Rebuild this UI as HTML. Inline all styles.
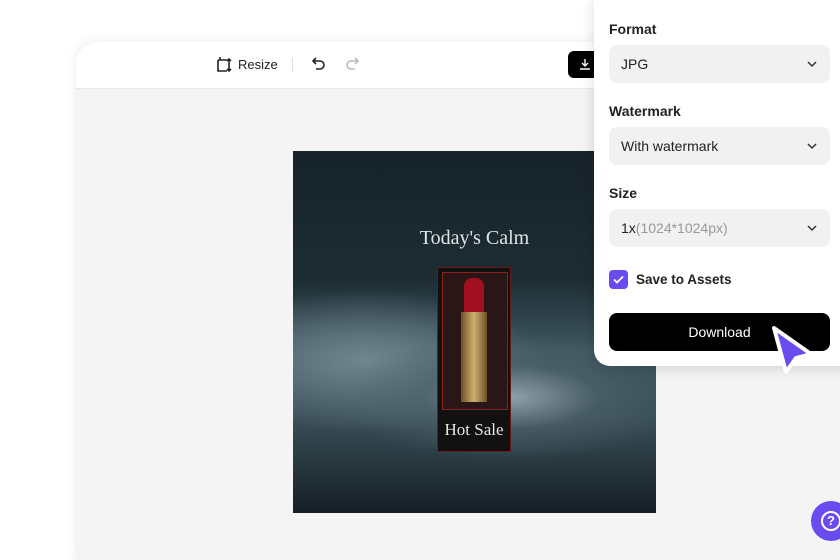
<!DOCTYPE html>
<html><head><style>
html,body{margin:0;width:840px;height:560px;overflow:hidden}
body{background:#fff;position:relative;font-family:"Liberation Sans",sans-serif}
.card{position:absolute;left:76px;top:42px;width:800px;height:518px;background:#f4f4f4;border-radius:22px 0 0 0;box-shadow:0 0 14px rgba(0,0,0,.08);overflow:hidden}
.hdr{position:absolute;left:0;top:0;right:0;height:46px;background:#fff;border-bottom:1px solid #e8e8e8}
.img{position:absolute;width:363px;height:362px;background:
radial-gradient(ellipse 60% 22% at 60% 68%,#8ea1ab 0%,rgba(80,100,110,.6) 40%,transparent 80%),
radial-gradient(ellipse 70% 28% at 20% 58%,#71868f 0%,transparent 70%),
linear-gradient(#17232a 0%,#1d2c33 35%,#3f5660 55%,#384c55 75%,#151f25 100%)}
.panel{position:absolute;left:594px;top:0;width:260px;height:366px;background:#fff;border-radius:0 0 0 16px;box-shadow:0 2px 14px rgba(0,0,0,.15)}
.lab{position:absolute;left:15px;font-size:14px;font-weight:bold;color:#222}
.sel{position:absolute;left:15px;width:221px;height:38px;background:#f1f1f1;border-radius:8px;font-size:14px;color:#222;line-height:38px;padding-left:12px;box-sizing:border-box}
.sel svg{position:absolute;right:12px;top:13px}
</style></head><body>
<div class="card">
<div class="hdr">
<svg style="position:absolute;left:140px;top:14px" width="18" height="18" viewBox="0 0 18 18" fill="none" stroke="#222" stroke-width="1.6"><path d="M2 4h9M2 4v11h9M4 1v3M13 3v12M11 5l2-2 2 2M11 13l2 2 2-2"/></svg>
<span style="position:absolute;left:162px;top:15px;font-size:13px;color:#222">Resize</span>
<div style="position:absolute;left:216px;top:16px;width:1px;height:14px;background:#ddd"></div>
<svg style="position:absolute;left:235px;top:14px" width="16" height="16" viewBox="0 0 16 16" fill="none" stroke="#222" stroke-width="1.6"><path d="M5 2L2 5l3 3M2 5h7a4 4 0 010 8H5"/></svg>
<svg style="position:absolute;left:268px;top:14px" width="16" height="16" viewBox="0 0 16 16" fill="none" stroke="#bbb" stroke-width="1.6"><path d="M11 2l3 3-3 3M14 5H7a4 4 0 000 8h4"/></svg>
<div style="position:absolute;left:492px;top:9px;width:40px;height:27px;background:#000;border-radius:6px"><svg style="position:absolute;left:11px;top:7px" width="12" height="12" viewBox="0 0 12 12" fill="none" stroke="#fff" stroke-width="1.4"><path d="M6 1v7M3 5l3 3 3-3M1 11h10"/></svg></div>
</div>
<div class="img" style="left:217px;top:109px">
<div style="position:absolute;left:0;right:0;top:76px;text-align:center;color:#dfe4e6;font-family:'Liberation Serif',serif;font-size:20px">Today's Calm</div>
<div style="position:absolute;left:144px;top:116px;width:74px;height:185px;background:#111;border:1px solid #6a1a1a;box-sizing:border-box">
<div style="position:absolute;left:4px;top:4px;width:64px;height:136px;background:#2a1616;border:1px solid #8a1f1f"></div>
<div style="position:absolute;left:26px;top:10px;width:20px;height:34px;background:#a01020;border-radius:8px 8px 0 0"></div>
<div style="position:absolute;left:23px;top:44px;width:26px;height:90px;background:linear-gradient(90deg,#6b5226,#d0b070,#6b5226)"></div>
<div style="position:absolute;left:0;right:0;top:152px;text-align:center;color:#e6e6e6;font-family:'Liberation Serif',serif;font-size:17px">Hot Sale</div>
</div>
</div>
</div>
<div class="panel">
<div class="lab" style="top:21px">Format</div>
<div class="sel" style="top:45px">JPG<svg width="12" height="12" viewBox="0 0 12 12" fill="none" stroke="#333" stroke-width="1.5"><path d="M2 4l4 4 4-4"/></svg></div>
<div class="lab" style="top:103px">Watermark</div>
<div class="sel" style="top:127px">With watermark<svg width="12" height="12" viewBox="0 0 12 12" fill="none" stroke="#333" stroke-width="1.5"><path d="M2 4l4 4 4-4"/></svg></div>
<div class="lab" style="top:185px">Size</div>
<div class="sel" style="top:209px">1x<span style="color:#999">(1024*1024px)</span><svg width="12" height="12" viewBox="0 0 12 12" fill="none" stroke="#333" stroke-width="1.5"><path d="M2 4l4 4 4-4"/></svg></div>
<div style="position:absolute;left:15px;top:270px;width:19px;height:19px;background:#6a4bf0;border-radius:4px"><svg width="19" height="19" viewBox="0 0 19 19" fill="none" stroke="#fff" stroke-width="1.8"><path d="M5 9.5l3 3 6-6"/></svg></div>
<div class="lab" style="top:272px;left:42px;font-size:13.5px">Save to Assets</div>
<div style="position:absolute;left:15px;top:313px;width:221px;height:38px;background:#000;border-radius:8px;color:#fff;font-size:14px;text-align:center;line-height:38px">Download</div>
</div>
<svg style="position:absolute;left:766px;top:320px" width="54" height="58" viewBox="0 0 54 58"><path d="M8 8L45 34 30 38 20 52Z" fill="#6a4bf0" stroke="#fff" stroke-width="4" stroke-linejoin="round"/></svg>
<div style="position:absolute;left:811px;top:501px;width:40px;height:40px;border-radius:50%;background:#6a4bf0"><div style="position:absolute;left:10px;top:10px;width:16px;height:16px;border:2px solid #fff;border-radius:50%;color:#fff;font-size:13px;font-weight:bold;text-align:center;line-height:16px">?</div></div>
</body></html>
